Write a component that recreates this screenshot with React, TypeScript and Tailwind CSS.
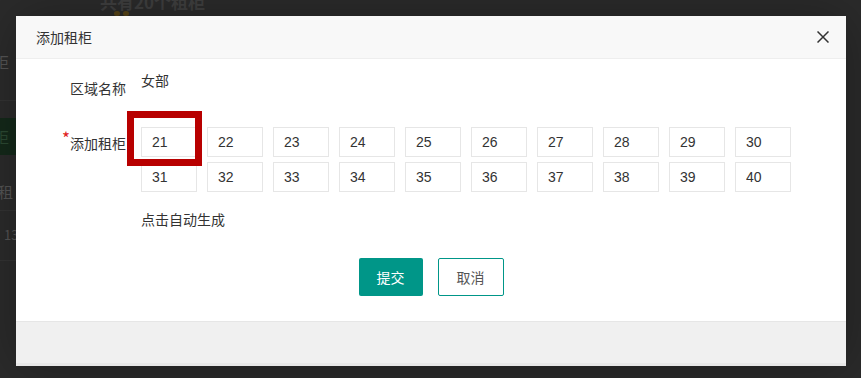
import { useState } from "react";

const FONT = { fontFamily: '"Microsoft YaHei", "Noto Sans CJK SC", "Liberation Sans", sans-serif' };

const firstRow = ["21", "22", "23", "24", "25", "26", "27", "28", "29", "30"];
const secondRow = ["31", "32", "33", "34", "35", "36", "37", "38", "39", "40"];

function CellInput({ value }: { value: string }) {
  const [v, setV] = useState(value);
  return (
    <input
      value={v}
      onChange={(e) => setV(e.target.value)}
      className="w-[56px] h-[30px] border border-[#e6e6e6] bg-white pl-[10px] text-[14px] text-[#333] outline-none font-['Liberation_Sans',Arial,sans-serif]"
    />
  );
}

// dimmed page under the modal
function BackPage() {
  return (
    <div className="absolute inset-0 bg-[#2b2b2b] text-[#5a5a5a]">
      <div className="absolute left-[100px] top-[-11px] text-[17px] font-bold text-[#3f3f3f]">共有20个租柜</div>
      <div className="absolute left-[114px] top-[11px] flex gap-[3px]">
        <span className="w-[6px] h-[5px] rounded-full bg-[#574418]" />
        <span className="w-[6px] h-[5px] rounded-full bg-[#574418]" />
      </div>
      <div className="absolute left-[-6px] top-[51px] text-[15px] text-[#555]">柜</div>
      <div className="absolute left-0 top-[100px] w-[16px] h-px bg-[#333]" />
      <div className="absolute left-0 top-[118px] w-[16px] h-[37px] bg-[#14291a] text-[15px] leading-[37px] text-[#2c4a33]">
        <span className="relative left-[-6px]">柜</span>
      </div>
      <div className="absolute left-[-2px] top-[181px] text-[15px] text-[#555]">租</div>
      <div className="absolute left-0 top-[210px] w-[16px] h-px bg-[#333]" />
      <div className="absolute left-[4px] top-[225px] text-[13px] text-[#555]">13</div>
      <div className="absolute left-0 top-[260px] w-[16px] h-px bg-[#333]" />
    </div>
  );
}

export default function App() {
  return (
    <div className="relative w-[861px] h-[378px] overflow-hidden" style={FONT}>
      <BackPage />

      <div className="absolute left-[16px] top-[16px] w-[830px] bg-white shadow-[1px_1px_50px_rgba(0,0,0,0.3)] flex flex-col">
        <div className="relative h-[43px] bg-[#f8f8f8] border-b border-[#eee] pl-[20px] text-[14px] leading-[42px] text-[#333]">
          添加租柜
          <button className="absolute right-[17px] top-[15px] w-[12px] h-[12px]">
            <svg viewBox="0 0 12 12" width="12" height="12">
              <path d="M0.5 0.5 L11.5 11.5 M11.5 0.5 L0.5 11.5" stroke="#333" strokeWidth="1.5" />
            </svg>
          </button>
        </div>

        <div className="h-[262px] pt-[10px] pl-[15px] text-[14px] text-[#333]">
          <div className="flex">
            <label className="w-[110px] pr-[15px] py-[9px] text-right leading-[20px]">区域名称</label>
            <div className="pt-[1px] leading-[20px]">女部</div>
          </div>

          <div className="flex mt-[17px]">
            <label className="w-[110px] pr-[15px] py-[9px] text-right leading-[20px]">
              <span className="text-[#e02020] text-[17px] leading-[10px] relative top-[-4px]">*</span>添加租柜
            </label>
            <div className="relative mt-[3px] flex flex-col gap-[5px]">
              <div className="flex gap-[10px]">
                {firstRow.map((n) => (
                  <CellInput key={n} value={n} />
                ))}
              </div>
              <div className="flex gap-[10px]">
                {secondRow.map((n) => (
                  <CellInput key={n} value={n} />
                ))}
              </div>
              <div className="absolute left-[-14px] top-[-16px] w-[75px] h-[55px] border-[7px] border-[#b80000] pointer-events-none" />
            </div>
          </div>

          <div className="ml-[110px] mt-[17px] leading-[20px] cursor-pointer">点击自动生成</div>

          <div className="flex justify-center gap-[15px] mt-[29px] pr-[15px]">
            <button className="h-[38px] px-[18px] rounded-[2px] bg-[#009688] text-white text-[14px]">提交</button>
            <button className="h-[38px] px-[18px] rounded-[2px] border border-[#009688] bg-white text-[#555] text-[14px]">取消</button>
          </div>
        </div>

        <div className="h-[45px] bg-[#f0f0f0] border-t border-[#e6e6e6] border-b-[3px] border-b-[#e8e8e8]" />
      </div>
    </div>
  );
}
